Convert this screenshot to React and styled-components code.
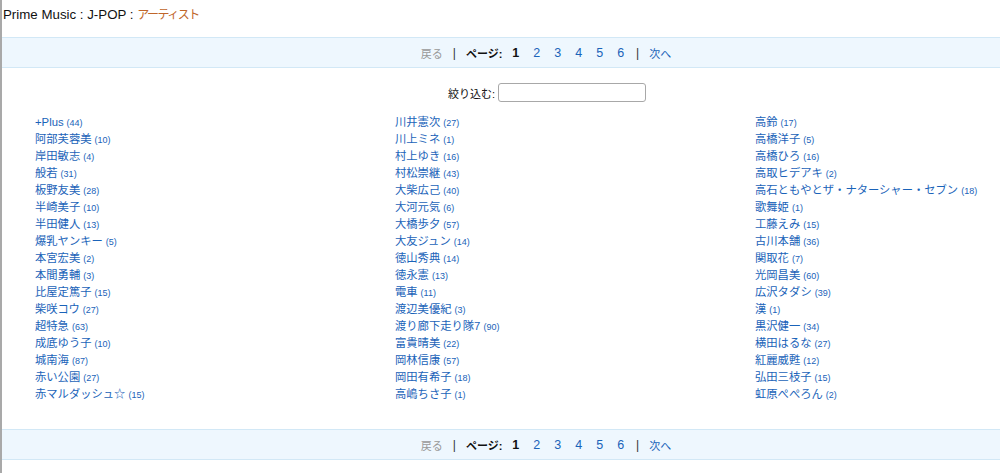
import React from 'react';
import styled, { createGlobalStyle } from 'styled-components';

const GlobalStyle = createGlobalStyle`
  html, body {
    margin: 0;
    padding: 0;
    background: #fff;
    overflow: hidden;
  }
  body {
    font-family: "Liberation Sans", "Noto Sans CJK JP", sans-serif;
    color: #111;
  }
`;

const Page = styled.div`
  width: 1000px;
  height: 473px;
  border-left: 2px solid #a9a9a9;
  box-sizing: border-box;
`;

const Header = styled.div`
  height: 37px;
  box-sizing: border-box;
  padding: 7px 0 0 1px;
  font-size: 13.3px;
  line-height: 16px;
  white-space: nowrap;
`;

const Crumb = styled.span`
  color: #c0662a;
  font-size: 12px;
  letter-spacing: -1.5px;
`;

const Band = styled.div`
  height: 29px;
  box-sizing: content-box;
  padding-left: 90px;
  background: #eef7fe;
  border-top: 1px solid #d2e8f6;
  border-bottom: 1px solid #d2e8f6;
  display: flex;
  align-items: center;
  justify-content: center;
  gap: 10px;
  font-size: 12px;
  margin-top: ${p => p.$top || 0}px;
`;

const PagerText = styled.span`
  font-size: 11px;
  color: ${p => (p.$muted ? '#999' : p.$link ? '#1a63b9' : '#111')};
  font-weight: ${p => (p.$bold ? 700 : 400)};
`;

const Sep = styled.span`
  color: #333;
  font-size: 12px;
`;

const Pages = styled.span`
  display: flex;
  gap: 14px;
  margin-right: 2px;
`;

const PageNum = styled.a`
  font-size: 12.5px;
  text-decoration: none;
  color: ${p => (p.$current ? '#111' : '#1a63b9')};
  font-weight: ${p => (p.$current ? 700 : 400)};
`;

const FilterRow = styled.div`
  display: flex;
  justify-content: center;
  align-items: center;
  gap: 3px;
  padding: 15px 0 0 92px;
  font-size: 11px;
`;

const FilterInput = styled.input`
  width: 148px;
  height: 19px;
  box-sizing: border-box;
  border: 1px solid #a8a8a8;
  border-radius: 3px;
  padding: 0 4px;
  margin: 0;
`;

const Columns = styled.div`
  display: grid;
  grid-template-columns: 360px 360px 1fr;
  padding: 10px 0 0 33px;
  height: 289px;
`;

const Column = styled.ul`
  list-style: none;
  margin: 0;
  padding: 0;
`;

const Item = styled.li`
  height: 17px;
  line-height: 17px;
  white-space: nowrap;
`;

const Name = styled.a`
  color: #1a63b9;
  font-size: 11.3px;
  text-decoration: none;
`;

const Count = styled.span`
  color: #1a63b9;
  font-size: 9px;
  margin-left: 3px;
`;

const columns = [
  [
    ['+Plus', 44], ['阿部芙蓉美', 10], ['岸田敏志', 4], ['般若', 31], ['板野友美', 28],
    ['半崎美子', 10], ['半田健人', 13], ['爆乳ヤンキー', 5], ['本宮宏美', 2], ['本間勇輔', 3],
    ['比屋定篤子', 15], ['柴咲コウ', 27], ['超特急', 63], ['成底ゆう子', 10], ['城南海', 87],
    ['赤い公園', 27], ['赤マルダッシュ☆', 15],
  ],
  [
    ['川井憲次', 27], ['川上ミネ', 1], ['村上ゆき', 16], ['村松崇継', 43], ['大柴広己', 40],
    ['大河元気', 6], ['大橋歩夕', 57], ['大友ジュン', 14], ['徳山秀典', 14], ['徳永憲', 13],
    ['電車', 11], ['渡辺美優紀', 3], ['渡り廊下走り隊7', 90], ['富貴晴美', 22], ['岡林信康', 57],
    ['岡田有希子', 18], ['高嶋ちさ子', 1],
  ],
  [
    ['高鈴', 17], ['高橋洋子', 5], ['高橋ひろ', 16], ['高取ヒデアキ', 2],
    ['高石ともやとザ・ナターシャー・セブン', 18], ['歌舞姫', 1], ['工藤えみ', 15], ['古川本舗', 36],
    ['関取花', 7], ['光岡昌美', 60], ['広沢タダシ', 39], ['漢', 1], ['黒沢健一', 34],
    ['横田はるな', 27], ['紅麗威甦', 12], ['弘田三枝子', 15], ['虹原ぺぺろん', 2],
  ],
];

function Pager({ top }) {
  return (
    <Band $top={top}>
      <PagerText $muted>戻る</PagerText>
      <Sep>|</Sep>
      <PagerText $bold>ページ:</PagerText>
      <Pages>
        {[1, 2, 3, 4, 5, 6].map(n => (
          <PageNum key={n} href="#" $current={n === 1}>{n}</PageNum>
        ))}
      </Pages>
      <Sep>|</Sep>
      <PagerText $link>次へ</PagerText>
    </Band>
  );
}

export default function App() {
  return (
    <>
      <GlobalStyle />
      <Page>
        <Header>
          Prime Music : J-POP : <Crumb>アーティスト</Crumb>
        </Header>
        <Pager />
        <FilterRow>
          <span>絞り込む:</span>
          <FilterInput type="text" />
        </FilterRow>
        <Columns>
          {columns.map((col, i) => (
            <Column key={i}>
              {col.map(([name, count]) => (
                <Item key={name}>
                  <Name href="#">{name}</Name>
                  <Count>({count})</Count>
                </Item>
              ))}
            </Column>
          ))}
        </Columns>
        <Pager top={28} />
      </Page>
    </>
  );
}
